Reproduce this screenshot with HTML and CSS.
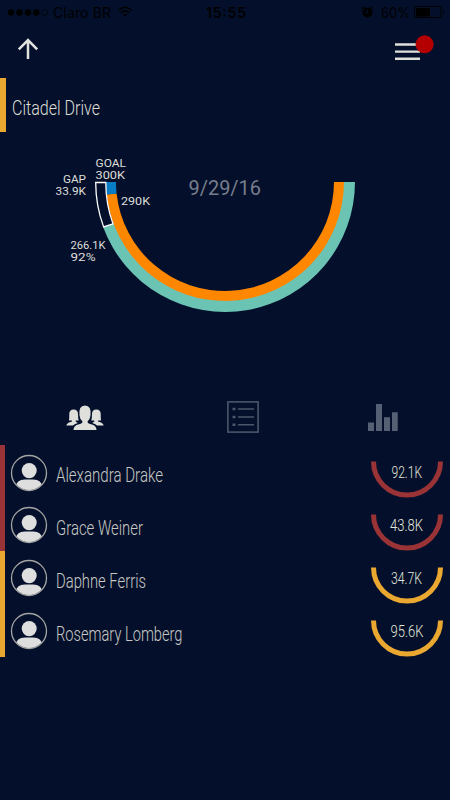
FILE: index.html
```html
<!DOCTYPE html>
<html lang="en">
<head>
<meta charset="utf-8">
<title>Citadel Drive</title>
<link rel="stylesheet" href="styles.css">
</head>
<body>
<svg class="defs" aria-hidden="true">
  <defs>
    <clipPath id="face"><circle cx="19" cy="19" r="17"/></clipPath>
    <symbol id="avatar" viewBox="0 0 38 38">
      <circle cx="19" cy="19" r="17.5" fill="none" stroke="#a4a4a2" stroke-width="1.3"/>
      <ellipse cx="19.2" cy="16.6" rx="7.5" ry="7.6" fill="#dedede"/>
      <path clip-path="url(#face)" d="M6 36v-3q0-7.500 9-7.500h8q9 0 9 7.500v3z" fill="#dedede"/>
    </symbol>
    <symbol id="arc" viewBox="0 0 72 37">
      <path d="M2.500 0.500A33.500 33.500 0 0 0 69.500 0.500" fill="none" stroke="currentColor" stroke-width="5"/>
    </symbol>
  </defs>
</svg>
<div class="screen">
  <header class="status">
    <svg width="450" height="25">
      <g fill="#000">
        <circle cx="11" cy="12.500" r="3.300"/><circle cx="19.500" cy="12.500" r="3.300"/><circle cx="28" cy="12.500" r="3.300"/><circle cx="36.300" cy="12.500" r="3.300"/>
        <circle cx="44.700" cy="12.500" r="3" fill="none" stroke="#000" stroke-width=".7"/>
        <text x="53" y="17.500" font-size="14" textLength="58">Claro BR</text>
        <text x="206" y="17.500" font-size="14" font-weight="600" textLength="40">15:55</text>
        <text x="381" y="17.500" font-size="14" textLength="29" lengthAdjust="spacingAndGlyphs">60%</text>
        <path d="M125 16.700l-2.200-2.200q2.200-1.700 4.400 0z"/>
        <circle cx="367.500" cy="12.500" r="5"/>
        <rect x="416" y="8" width="14" height="8.500"/>
        <path d="M443 10q2 2.500 0 5z"/>
      </g>
      <g fill="none" stroke="#000" stroke-width="1.500">
        <path d="M118.500 10.200q6.500-5.800 13 0M120.800 12.700q4.200-3.600 8.400 0"/>
        <path d="M362 9l2.500-2.300M373 9l-2.500-2.300"/>
        <rect x="414.500" y="6.500" width="26.500" height="11" rx="1.500" stroke-width="1"/>
      </g>
      <path d="M367.500 9.500v3.300h-3" fill="none" stroke="#04102b"/>
    </svg>
  </header>
  <nav class="nav">
    <svg class="back" width="22" height="22" viewBox="0 0 22 22"><path d="M11 21V2M1.800 11.300L11 2l9.200 9.300" fill="none" stroke="#e2e2df" stroke-width="2.500"/></svg>
    <svg class="menu" width="41" height="28" viewBox="0 0 41 28">
      <path d="M1 9.500h25M1 16.600h25M1 23.700h25" stroke="#dfe0dc" stroke-width="2.400"/>
      <circle cx="30.600" cy="9.300" r="9" fill="#b40000"/>
    </svg>
  </nav>
  <section class="title"><svg width="200" height="54"><text x="6" y="37.200" textLength="88" lengthAdjust="spacingAndGlyphs">Citadel Drive</text></svg></section>
  <section class="chart">
    <svg width="450" height="200" viewBox="0 132 450 200">
      <path d="M103.100 227.100A130 130 0 0 0 355 182H343A118 118 0 0 1 114.400 223Z" fill="#6bc3b4"/>
      <path d="M106.650 194.400A119 119 0 0 0 344 182H334A109 109 0 0 1 116.600 193.400Z" fill="#ff8700"/>
      <path d="M106 182H116Q116 187.700 116.600 193.400L106.650 194.400Q106 188 106 182Z" fill="#087cc4"/>
      <path d="M95.700 182.500H105.800A119.500 119.500 0 0 0 113 223.800L103.600 226.900A129.500 129.500 0 0 1 95.700 182.500Z" fill="#04102b" stroke="#fff" stroke-width="1.300"/>
      <g class="labels">
        <text x="95.500" y="166.600" textLength="30.500" lengthAdjust="spacingAndGlyphs">GOAL</text>
        <text x="95.500" y="178.500" textLength="29.500" lengthAdjust="spacingAndGlyphs">300K</text>
        <text x="63" y="183" textLength="23" lengthAdjust="spacingAndGlyphs">GAP</text>
        <text x="55.500" y="194.800" textLength="30.500" lengthAdjust="spacingAndGlyphs">33.9K</text>
        <text x="121" y="205" textLength="29" lengthAdjust="spacingAndGlyphs">290K</text>
        <text x="70.500" y="249" textLength="35" lengthAdjust="spacingAndGlyphs">266.1K</text>
        <text x="70.500" y="261" textLength="25" lengthAdjust="spacingAndGlyphs">92%</text>
      </g>
      <text class="date" x="188.500" y="194.600" textLength="72.500" lengthAdjust="spacingAndGlyphs">9/29/16</text>
    </svg>
  </section>
  <div class="tabs">
    <svg width="38" height="26" viewBox="0 0 38 26" fill="#dfe0dc">
      <path d="M0.300 20.500Q1 17.500 6 16.500V15.500H3Q3.300 13 3.300 9Q3.300 4.500 7.600 4.500Q12 4.500 12 9Q12 13 12.700 15.500H9.700V16.500L11.700 18Q8 19 7 20.500Z"/>
      <path d="M37.700 20.500Q37 17.500 32 16.500V15.500H35Q34.700 13 34.700 9Q34.700 4.500 30.400 4.500Q26 4.500 26 9Q26 13 25.300 15.500H28.300V16.500L26.300 18Q30 19 31 20.500Z"/>
      <path d="M7.500 25Q7.500 20.500 13 19.300Q16.500 18.500 16.500 16.500Q13.800 14 13.500 10.500Q12.300 0.500 19 0.500T24.500 10.500Q24.200 14 21.500 16.500Q21.500 18.500 25 19.300Q30.500 20.500 30.500 25Z" stroke="#04102b" stroke-width="1" paint-order="stroke"/>
    </svg>
    <svg width="32" height="32" viewBox="0 0 32 32" fill="none" stroke="#4b556b">
      <rect x=".9" y=".9" width="30.200" height="30.200" stroke-width="1.600"/>
      <path d="M11 8h16M11 16h16M11 23.700h16" stroke-width="1.400"/>
      <path d="M5.500 8h3M5.500 16h3M5.500 23.700h3" stroke-width="2.600"/>
    </svg>
    <svg width="30" height="28" viewBox="0 0 30 28" fill="#566075"><path d="M0 18.500h6V27H0zM8 0h6v27H8zM16 13.200h6V27h-6zM24 8.200h5.700V27H24z"/></svg>
  </div>
  <main class="list">
    <div class="row red"><svg class="pic"><use href="#avatar"/></svg><svg class="name"><text x="0" y="37" textLength="107" lengthAdjust="spacingAndGlyphs">Alexandra Drake</text></svg><div class="gauge"><svg class="arc"><use href="#arc"/></svg><svg class="value"><text x="20.500" y="17.200" textLength="30.500" lengthAdjust="spacingAndGlyphs">92.1K</text></svg></div></div>
    <div class="row red"><svg class="pic"><use href="#avatar"/></svg><svg class="name"><text x="0" y="37" textLength="87" lengthAdjust="spacingAndGlyphs">Grace Weiner</text></svg><div class="gauge"><svg class="arc"><use href="#arc"/></svg><svg class="value"><text x="19" y="17.200" textLength="33" lengthAdjust="spacingAndGlyphs">43.8K</text></svg></div></div>
    <div class="row amber"><svg class="pic"><use href="#avatar"/></svg><svg class="name"><text x="0" y="37" textLength="90" lengthAdjust="spacingAndGlyphs">Daphne Ferris</text></svg><div class="gauge"><svg class="arc"><use href="#arc"/></svg><svg class="value"><text x="20" y="17.200" textLength="31" lengthAdjust="spacingAndGlyphs">34.7K</text></svg></div></div>
    <div class="row amber"><svg class="pic"><use href="#avatar"/></svg><svg class="name"><text x="0" y="37" textLength="126.500" lengthAdjust="spacingAndGlyphs">Rosemary Lomberg</text></svg><div class="gauge"><svg class="arc"><use href="#arc"/></svg><svg class="value"><text x="19.500" y="17.200" textLength="33" lengthAdjust="spacingAndGlyphs">95.6K</text></svg></div></div>
  </main>
</div>
</body>
</html>
```
FILE: styles.css
```css
* { box-sizing: border-box; }
body { margin: 0; background: #04102b; font-family: Roboto, "Liberation Sans", sans-serif; }
svg { display: block; overflow: visible; }
.defs { position: absolute; width: 0; height: 0; }
.screen { height: 800px; overflow: hidden; display: flex; flex-direction: column; background: #04102b; }
.status { height: 25px; font-family: Inter, sans-serif; }
.nav { height: 53px; display: flex; justify-content: space-between; padding: 13px 15.5px 0 17px; }
.menu { margin-top: -3px; }
.title { height: 54px; border-left: 6px solid #eba831; }
.title text { font-size: 21px; fill: #deded6; font-weight: 300; }
.chart { height: 269px; }
.labels text { fill: #deded9; font-size: 11.8px; }
.date { fill: #777d8c; font-size: 20px; font-weight: 400; }
.tabs { height: 44px; display: flex; padding-left: 66px; }
.tabs svg:nth-child(1) { margin-top: 4px; }
.tabs svg:nth-child(2) { margin-left: 123px; }
.tabs svg:nth-child(3) { margin: 3px 0 0 109px; }
.row { height: 52.9px; display: flex; border-left: 5px solid; padding: 0 7px 0 5px; }
.red { color: #9a3336; }
.amber { color: #eba831; }
.pic { width: 38px; height: 38px; margin-top: 8.5px; }
.name { width: 240px; height: 53px; margin-left: 7.5px; }
.name text { font-size: 20.5px; font-weight: 300; fill: #c8c9c4; }
.gauge { display: grid; width: 72px; height: 37px; margin: 16px 0 0 auto; }
.gauge svg { grid-area: 1 / 1; width: 72px; height: 37px; }
.value text { font-size: 16.5px; font-weight: 300; fill: #e2e7dc; }
```
